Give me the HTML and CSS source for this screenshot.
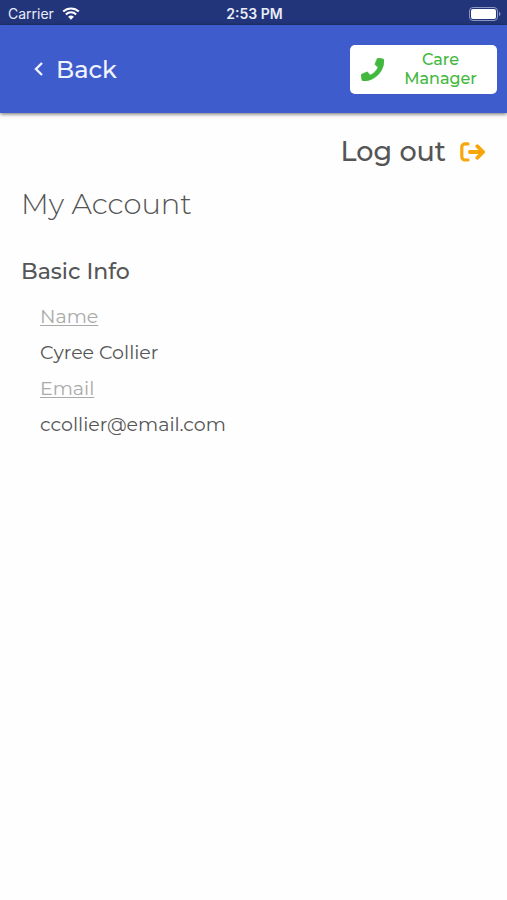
FILE: index.html
```html
<!DOCTYPE html>
<html lang="en">
<head>
    <meta charset="UTF-8">
    <meta name="viewport" content="width=device-width, initial-scale=1.0">
    <title>My Account</title>
    <link rel="stylesheet" href="styles.css">
</head>
<body>

    <div class="status-bar">
        <div class="carrier">
            <span>Carrier</span>
            <svg class="wifi" viewBox="0 0 18 13" aria-hidden="true">
                <path d="M1.2 4.6a11.2 11.2 0 0 1 15.6 0M3.9 7.4a7.3 7.3 0 0 1 10.2 0" fill="none" stroke="currentColor" stroke-width="2.1"/>
                <path d="M9 12.8l-2.9-3a4.2 4.2 0 0 1 5.8 0z" fill="currentColor"/>
            </svg>
        </div>
        <div class="time">2:53 PM</div>
        <svg class="battery" viewBox="0 0 32 14" aria-hidden="true">
            <rect x=".5" y=".5" width="28" height="13" rx="3.5" fill="none" stroke="#8d97c3"/>
            <rect x="2" y="2" width="25" height="10" rx="2" fill="#fff"/>
            <path d="M30 4.8a2.4 2.4 0 0 1 0 4.4z" fill="#8d97c3"/>
        </svg>
    </div>

    <header class="header">
        <a class="back" href="#">
            <svg class="chevron" viewBox="0 0 10 14" aria-hidden="true">
                <path d="M8 1L2 7L8 13" fill="none" stroke="currentColor" stroke-width="2.4"/>
            </svg>
            <span>Back</span>
        </a>
        <button class="call-button" type="button">
            <svg class="phone" viewBox="0 0 512 512" aria-hidden="true">
                <path fill="currentColor" stroke="currentColor" stroke-width="14" stroke-linejoin="round" d="M493.4 24.6l-104-24c-11.3-2.6-22.9 3.3-27.5 13.9l-48 112c-4.2 9.8-1.4 21.3 6.9 28l60.6 49.6c-36 76.7-98.9 140.5-177.2 177.2l-49.6-60.6c-6.8-8.3-18.2-11.1-28-6.9l-112 48C3.9 366.5-2 378.1.6 389.4l24 104C27.1 504.2 36.7 512 48 512c256.1 0 464-207.5 464-464 0-11.2-7.7-20.9-18.6-23.4z"/>
            </svg>
            <span class="call-label">Care Manager</span>
        </button>
    </header>

    <main class="content">
        <button class="logout" type="button">
            <span>Log out</span>
            <svg class="logout-icon" viewBox="0 0 26 20" aria-hidden="true">
                <g fill="none" stroke="currentColor" stroke-width="3.2" stroke-linecap="round">
                    <path d="M8 1.9H5A3.2 3.2 0 0 0 1.8 5.1V14.8a3.2 3.2 0 0 0 3.2 3.2h3"/>
                    <path d="M10 10h12" stroke-width="4"/>
                    <path d="M17.2 4.2L23.2 10L17.2 15.8" stroke-width="3.8" stroke-linejoin="round"/>
                </g>
            </svg>
        </button>

        <h1>My Account</h1>

        <section class="info">
            <h2>Basic Info</h2>
            <dl>
                <dt>Name</dt>
                <dd>Cyree Collier</dd>
                <dt>Email</dt>
                <dd>ccollier@email.com</dd>
            </dl>
        </section>
    </main>

</body>
</html>
```

FILE: styles.css
```css
* {
    box-sizing: border-box;
}

body {
    margin: 0;
    background: #fefefe;
    color: #555;
    font-family: Montserrat, Inter, sans-serif;
}

button {
    border: 0;
    font-family: inherit;
    cursor: pointer;
}

/* Status bar */
.status-bar {
    display: grid;
    grid-template-columns: 1fr auto 1fr;
    align-items: center;
    height: 25px;
    padding: 2px 6px 0 8px;
    background: #23357a;
    color: #e9ecf8;
    font-family: Inter, sans-serif;
    font-size: 14px;
}

.carrier {
    display: flex;
    align-items: center;
    gap: 8px;
}

.wifi {
    width: 18px;
    height: 13px;
    color: #fff;
}

.time {
    font-weight: 600;
}

.battery {
    width: 32px;
    height: 14px;
    justify-self: end;
}

/* Header */
.header {
    display: flex;
    align-items: center;
    justify-content: space-between;
    height: 88px;
    padding: 0 10px 0 34px;
    background: #3f5ccc;
    box-shadow: 0 1px 4px rgba(0, 0, 0, 0.6);
}

.back {
    display: flex;
    align-items: center;
    gap: 12px;
    color: #f1f3fc;
    font-size: 24px;
    font-weight: 500;
    text-decoration: none;
}

.chevron {
    width: 10px;
    height: 14px;
}

.call-button {
    display: flex;
    align-items: center;
    gap: 10px;
    width: 147px;
    height: 49px;
    padding: 0 10px 0 11px;
    border-radius: 5px;
    background: #fff;
    color: #43b83e;
}

.phone {
    flex: none;
    width: 23px;
    height: 23px;
}

.call-label {
    flex: 1;
    font-size: 16px;
    font-weight: 500;
    line-height: 19px;
}

/* Page */
.content {
    display: flex;
    flex-direction: column;
    padding: 20px 21px;
}

.logout {
    display: flex;
    align-items: center;
    align-self: flex-end;
    gap: 14px;
    padding: 0;
    background: none;
    color: #555;
    font-size: 27px;
    font-weight: 500;
    line-height: 38px;
}

.logout-icon {
    width: 26px;
    height: 20px;
    color: #f9a60c;
}

h1 {
    margin: 14px 0 0;
    font-size: 29px;
    font-weight: 300;
    line-height: 38px;
}

h2 {
    margin: 35px 0 0;
    font-size: 22px;
    font-weight: 500;
    line-height: 28px;
}

dl {
    display: grid;
    row-gap: 8px;
    margin: 17px 0 0;
    padding-left: 19px;
    font-size: 19px;
    line-height: 28px;
}

dt {
    color: #aaa;
    text-decoration: underline;
    text-underline-offset: 2px;
}

dd {
    margin: 0;
}
```
